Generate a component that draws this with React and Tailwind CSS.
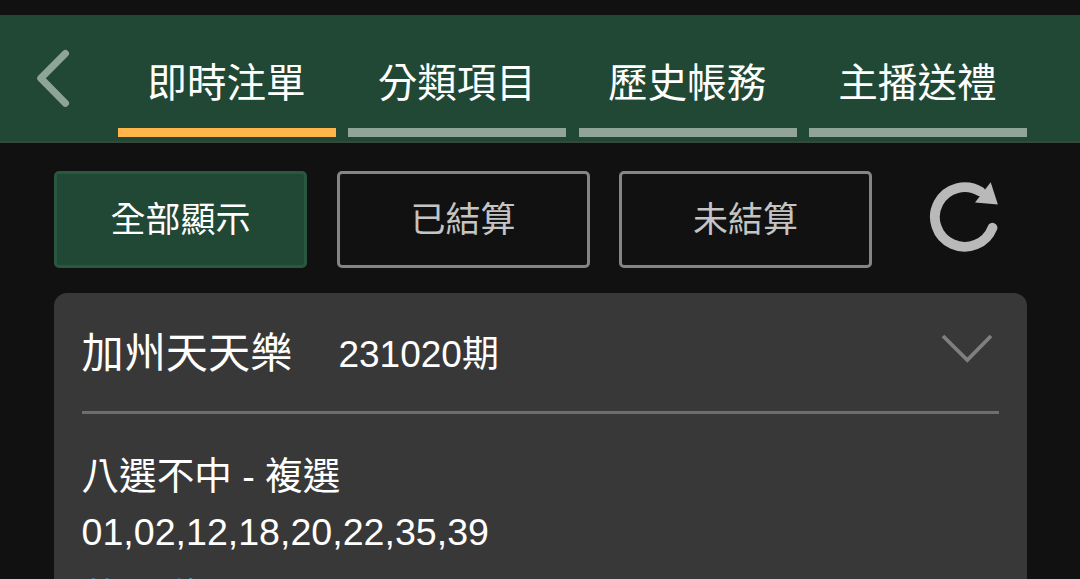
const tabs = ['即時注單', '分類項目', '歷史帳務', '主播送禮'];
const filters = ['全部顯示', '已結算', '未結算'];

function Header({ active }) {
  return (
    <header className="flex h-[128px] items-end border-b-2 border-[#37473e] bg-[#214834]">
      <button className="flex h-full w-[118px] shrink-0 items-start pt-[33px] pl-[36px]">
        <svg className="h-[60px] w-[34px]" viewBox="0 0 34 60" fill="none">
          <path
            d="M29.4 5.5 L4.8 30.3 L29.4 55.2"
            stroke="#8fa499"
            strokeWidth="7.2"
            strokeLinecap="round"
            strokeLinejoin="round"
          />
        </svg>
      </button>

      <nav className="flex gap-[12.3px] pb-[4px]">
        {tabs.map((tab, i) => (
          <div
            key={tab}
            className={`w-[218px] border-b-[9px] pr-[1px] pb-[23px] text-center text-[39.6px] leading-[44px] text-white ${
              i === active ? 'border-[#ffb54a]' : 'border-[#90a499]'
            }`}
          >
            {tab}
          </div>
        ))}
      </nav>
    </header>
  );
}

function Filters({ active }) {
  return (
    <div className="flex items-center pt-[28px] pl-[54px]">
      <div className="flex gap-[29.5px]">
        {filters.map((label, i) => (
          <button
            key={label}
            className={`h-[97px] w-[253px] rounded-[5px] border-[3px] pt-[2px] text-[35px] ${
              i === active
                ? 'border-[#285840] bg-[#214834] text-white'
                : 'border-[#858585] text-[#c4c4c4]'
            }`}
          >
            {label}
          </button>
        ))}
      </div>

      <button className="-mt-[4px] ml-[55px]">
        <svg className="h-[74px] w-[74px]" viewBox="0 -2 74 74" fill="none">
          <path
            d="M53.5 8.7 A29.8 29.8 0 1 0 65.5 44.7"
            stroke="#b9b9b9"
            strokeWidth="9.8"
            strokeLinecap="round"
          />
          <path d="M63.7 -0.7 L70.9 21.4 L48 19.5 Z" fill="#b9b9b9" />
        </svg>
      </button>
    </div>
  );
}

function BetCard() {
  return (
    <section className="mt-[25px] ml-[54px] h-[400px] w-[972.5px] rounded-[13px] bg-[#383838] px-[27.5px] text-white">
      <div className="flex h-[121px] items-center justify-between border-b-[3px] border-[#6e6e6e]">
        <div className="flex items-center gap-[46px] pt-[4px]">
          <h2 className="text-[42.2px]">加州天天樂</h2>
          <span className="pt-[2px] text-[37px]">231020期</span>
        </div>
        <svg className="mr-[6px] mb-[6px] h-[30px] w-[52px]" viewBox="0 0 52 30" fill="none">
          <path d="M2 2 L26.3 26 L50 2" stroke="#7f7f7f" strokeWidth="3.8" />
        </svg>
      </div>

      <div className="pt-[35px] text-[37.6px] leading-[55px]">
        <p>八選不中 - 複選</p>
        <p className="pt-px">01,02,12,18,20,22,35,39</p>
        <p className="pt-[10px] text-[#4a9fe8]">共 1 碰</p>
      </div>
    </section>
  );
}

export default function App() {
  return (
    <div className="h-[579px] w-[1080px] overflow-hidden bg-[#111111] pt-[15px] font-['Liberation_Sans','Noto_Sans_CJK_TC',sans-serif]">
      <Header active={0} />
      <Filters active={0} />
      <BetCard />
    </div>
  );
}
